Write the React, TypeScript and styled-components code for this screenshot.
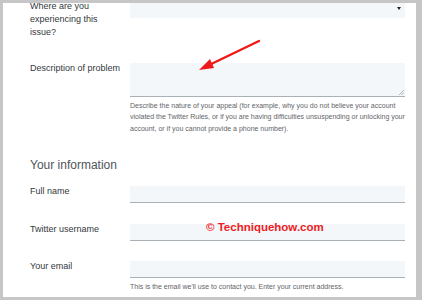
import React from 'react';
import styled, { createGlobalStyle } from 'styled-components';

const GlobalStyle = createGlobalStyle`
  html, body {
    margin: 0;
    padding: 0;
    background: #c6c6c6;
  }
  body {
    font-family: "Liberation Sans", Arial, sans-serif;
  }
`;

const App: React.FC = () => {
  return (
    <Frame>
      <GlobalStyle />
      <Page>
        <Form>
          <Row $top={-3}>
            <Label>Where are you experiencing this issue?</Label>
            <Select>
              <Caret />
            </Select>
          </Row>

          <Row $top={24}>
            <Label $offset={-1}>Description of problem</Label>
            <div>
              <TextArea>
                <ResizeGrip viewBox="0 0 6 6">
                  <path d="M1 6 L6 1 M3.5 6 L6 3.5" stroke="#9aa4ab" strokeWidth="0.8" />
                </ResizeGrip>
              </TextArea>
              <Help>
                Describe the nature of your appeal (for example, why you do not believe your account
                <br />
                violated the Twitter Rules, or if you are having difficulties unsuspending or unlocking your
                <br />
                account, or if you cannot provide a phone number).
              </Help>
            </div>
          </Row>

          <Heading>Your information</Heading>

          <Row $top={13}>
            <Label $offset={-1.5}>Full name</Label>
            <Input />
          </Row>

          <Row $top={21}>
            <Label $offset={-1.5}>Twitter username</Label>
            <Input />
          </Row>

          <Row $top={20}>
            <Label $offset={-1}>Your email</Label>
            <div>
              <Input />
              <Help>This is the email we'll use to contact you. Enter your current address.</Help>
            </div>
          </Row>
        </Form>

        <Arrow viewBox="0 0 70 40">
          <line x1="66" y1="8" x2="12" y2="34" stroke="#f01818" strokeWidth="2.4" strokeLinecap="round" />
          <polygon points="6,37 17,26 21,35" fill="#f01818" />
        </Arrow>
        <Watermark>© Techniquehow.com</Watermark>
      </Page>
    </Frame>
  );
};

export default App;

// Styled components
const Frame = styled.div`
  width: 422px;
  height: 300px;
  box-sizing: border-box;
  padding: 3px 6px 3px 3px;
  background: #c6c6c6;
`;

const Page = styled.div`
  position: relative;
  height: 294px;
  background: #ffffff;
  overflow: hidden;
`;

const Form = styled.div`
  display: flex;
  flex-direction: column;
  padding: 0 11px 0 27px;
`;

const Row = styled.div<{ $top: number }>`
  display: grid;
  grid-template-columns: 100px 275px;
  align-items: start;
  margin-top: ${p => p.$top}px;
`;

const Label = styled.div<{ $offset?: number }>`
  margin-top: ${p => p.$offset ?? 0}px;
  padding-right: 7px;
  font-size: 9px;
  line-height: 13px;
  color: #33383d;
`;

const Select = styled.div`
  position: relative;
  height: 18px;
  background: #f4f7f9;
`;

const Caret = styled.span`
  position: absolute;
  right: 4px;
  top: 7px;
  width: 0;
  height: 0;
  border-left: 2.5px solid transparent;
  border-right: 2.5px solid transparent;
  border-top: 3px solid #222;
`;

const TextArea = styled.div`
  position: relative;
  height: 33px;
  background: #f4f7f9;
  border-bottom: 1px solid #a9b0b6;
`;

const ResizeGrip = styled.svg`
  position: absolute;
  right: 1px;
  bottom: 1px;
  width: 6px;
  height: 6px;
`;

const Input = styled.div`
  height: 16px;
  background: #f4f7f9;
  border-bottom: 1px solid #a9b0b6;
`;

const Help = styled.div`
  margin-top: 2.5px;
  font-size: 7px;
  line-height: 11.5px;
  color: #5f6468;
  white-space: nowrap;
`;

const Heading = styled.div`
  margin-top: 23px;
  font-size: 12px;
  line-height: 16px;
  color: #4e555b;
`;

const Arrow = styled.svg`
  position: absolute;
  left: 190px;
  top: 30px;
  width: 70px;
  height: 40px;
`;

const Watermark = styled.div`
  position: absolute;
  left: 203px;
  top: 218px;
  font-size: 11.5px;
  font-weight: 700;
  color: #ee1c25;
  white-space: nowrap;
`;
